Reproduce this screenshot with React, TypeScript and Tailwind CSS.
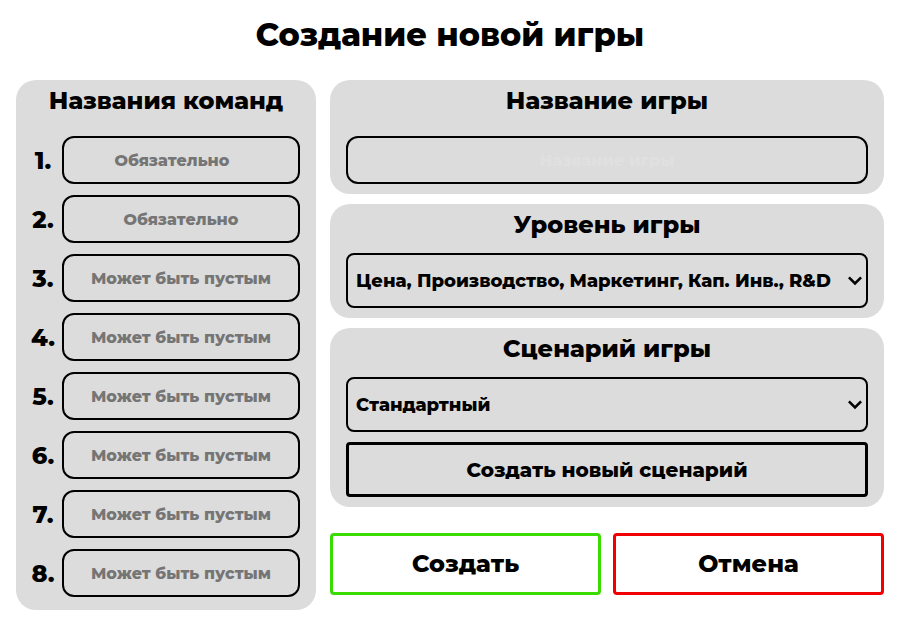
import type { ReactNode } from "react";

const teamHints = [
  "Обязательно",
  "Обязательно",
  "Может быть пустым",
  "Может быть пустым",
  "Может быть пустым",
  "Может быть пустым",
  "Может быть пустым",
  "Может быть пустым",
];

const fieldClass =
  "h-12 w-full min-w-0 rounded-xl border-2 border-black bg-transparent px-2 text-center text-base font-extrabold outline-none";

function Panel({ children }: { children: ReactNode }) {
  return <section className="rounded-[20px] bg-[#dcdcdc] px-4 pt-1 pb-2.5">{children}</section>;
}

function Dropdown({ id, option }: { id: string; option: string }) {
  return (
    <div className="relative">
      <select
        id={id}
        className="block h-[55px] w-full min-w-0 appearance-none rounded-lg border-2 border-black bg-[#dcdcdc] pr-8 pl-2 text-lg font-extrabold text-black"
      >
        <option>{option}</option>
      </select>
      <svg
        className="pointer-events-none absolute inset-y-0 right-1.5 my-auto"
        width="14"
        height="10"
        viewBox="0 0 14 10"
        fill="none"
        stroke="black"
        strokeWidth="2.6"
        aria-hidden="true"
      >
        <path d="M0.9 1.3 L7 7.4 L13.1 1.3" />
      </svg>
    </div>
  );
}

function TeamRow({ index, hint }: { index: number; hint: string }) {
  const id = `team-${index}`;
  return (
    <li className="flex items-center">
      <label htmlFor={id} className="w-[46px] shrink-0 pt-0.5 pl-2 text-center text-2xl font-extrabold">
        {index}.
      </label>
      <input
        id={id}
        type="text"
        placeholder={hint}
        className={`${fieldClass} placeholder:text-[#757575] ${index === 1 ? "pr-[26px]" : ""}`}
      />
    </li>
  );
}

export default function App() {
  return (
    <main className="px-4 pt-3 pb-2.5 font-['Montserrat','Inter',sans-serif] text-black">
      <h1 className="text-center text-[32px] leading-[46px] font-extrabold">Создание новой игры</h1>

      <form className="mt-[22px] flex items-start gap-3.5">
        <section className="w-[300px] shrink-0 rounded-[20px] bg-[#dcdcdc] pt-1 pr-4 pb-[13px]">
          <h2 className="pl-4 text-center text-2xl leading-[34px] font-extrabold">Названия команд</h2>
          <ol className="mt-[18px] flex flex-col gap-[11px]">
            {teamHints.map((hint, i) => (
              <TeamRow key={i} index={i + 1} hint={hint} />
            ))}
          </ol>
        </section>

        <div className="flex min-w-0 flex-1 flex-col gap-2.5">
          <Panel>
            <h2 className="text-center text-2xl leading-[34px] font-extrabold">
              <label htmlFor="game-name">Название игры</label>
            </h2>
            <input
              id="game-name"
              type="text"
              placeholder="Название игры"
              className={`${fieldClass} mt-[18px] block placeholder:text-[#e0e0e0]`}
            />
          </Panel>

          <Panel>
            <h2 className="mb-[11px] text-center text-2xl leading-[34px] font-extrabold">
              <label htmlFor="game-level">Уровень игры</label>
            </h2>
            <Dropdown id="game-level" option="Цена, Производство, Маркетинг, Кап. Инв., R&D" />
          </Panel>

          <Panel>
            <h2 className="mb-[11px] text-center text-2xl leading-[34px] font-extrabold">
              <label htmlFor="game-scenario">Сценарий игры</label>
            </h2>
            <Dropdown id="game-scenario" option="Стандартный" />
            <button
              type="button"
              className="mt-2.5 block h-[55px] w-full rounded border-3 border-black text-xl font-extrabold"
            >
              Создать новый сценарий
            </button>
          </Panel>

          <div className="mt-4 grid grid-cols-2 gap-3">
            <button type="submit" className="h-[62px] rounded border-3 border-[#3adb00] bg-white text-2xl font-extrabold">
              Создать
            </button>
            <button type="button" className="h-[62px] rounded border-3 border-[#f00000] bg-white text-2xl font-extrabold">
              Отмена
            </button>
          </div>
        </div>
      </form>
    </main>
  );
}
